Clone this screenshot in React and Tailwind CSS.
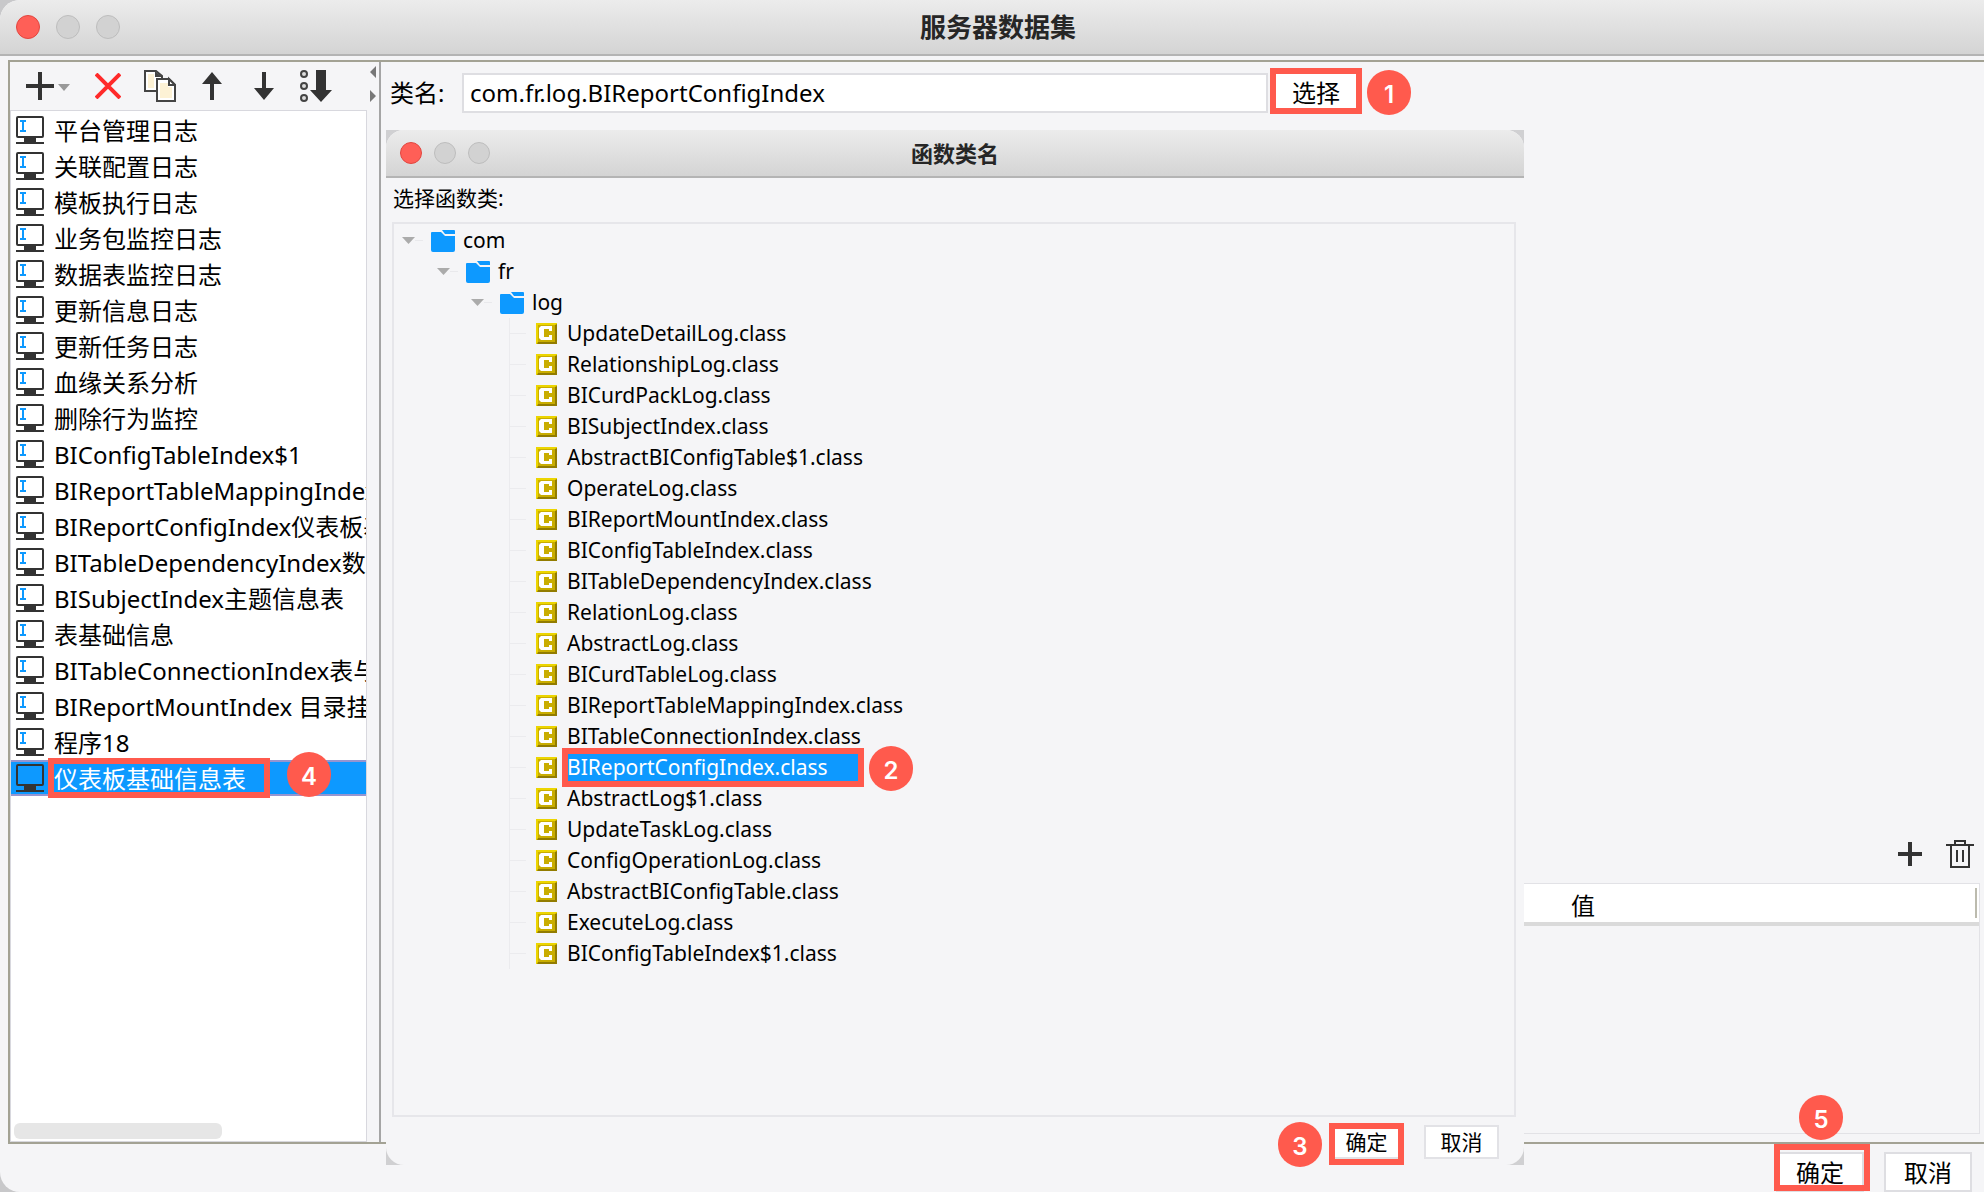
import React, { useState } from 'react';

const datasets = [
  '平台管理日志',
  '关联配置日志',
  '模板执行日志',
  '业务包监控日志',
  '数据表监控日志',
  '更新信息日志',
  '更新任务日志',
  '血缘关系分析',
  '删除行为监控',
  'BIConfigTableIndex$1',
  'BIReportTableMappingIndex',
  'BIReportConfigIndex仪表板基',
  'BITableDependencyIndex数',
  'BISubjectIndex主题信息表',
  '表基础信息',
  'BITableConnectionIndex表与',
  'BIReportMountIndex 目录挂',
  '程序18',
  '仪表板基础信息表',
];

const classes = [
  'UpdateDetailLog.class',
  'RelationshipLog.class',
  'BICurdPackLog.class',
  'BISubjectIndex.class',
  'AbstractBIConfigTable$1.class',
  'OperateLog.class',
  'BIReportMountIndex.class',
  'BIConfigTableIndex.class',
  'BITableDependencyIndex.class',
  'RelationLog.class',
  'AbstractLog.class',
  'BICurdTableLog.class',
  'BIReportTableMappingIndex.class',
  'BITableConnectionIndex.class',
  'BIReportConfigIndex.class',
  'AbstractLog$1.class',
  'UpdateTaskLog.class',
  'ConfigOperationLog.class',
  'AbstractBIConfigTable.class',
  'ExecuteLog.class',
  'BIConfigTableIndex$1.class',
];

/* Icons */
const DatasetIcon = ({ active }) => (
  <svg width="28" height="28" viewBox="0 0 28 28" className="shrink-0">
    <rect x="1" y="1" width="26" height="20" rx="1" fill={active ? '#0d99ff' : '#fff'} stroke="#333" strokeWidth="2" />
    <path d="M9 20h10v2h1v4H8v-4h1zM0 26h28v2H0z" fill="#333" />
    {!active && <path d="M4 4h6v2H8v8h2v2H4v-2h2V6H4z" fill="#0d99ff" />}
  </svg>
);

const FolderIcon = () => (
  <svg width="24" height="22" viewBox="0 0 24 22" className="shrink-0">
    <path d="M0 3a1 1 0 0 1 1-1h9l4 4h10v14a2 2 0 0 1-2 2H2a2 2 0 0 1-2-2z" fill="#0d99ff" />
    <path d="M11 0h12a1 1 0 0 1 1 1v3H14z" fill="#0d99ff" />
  </svg>
);

const ClassIcon = () => (
  <svg width="21" height="21" viewBox="0 0 21 21" className="shrink-0">
    <path d="M0 0h21v21H0z" fill="#c9ad00" />
    <path d="M0 0h21v2H2v19H0z" fill="#ecd500" />
    <path d="M21 1v20H1l1-2h17V2z" fill="#927c00" />
    <path d="M5 3h11v5h-3V6H8v8h5v-2h3v5H5l-2-2V5z" fill="#fff" />
  </svg>
);

const Triangle = () => (
  <svg width="13" height="7" viewBox="0 0 13 7" className="shrink-0">
    <path d="M0 0h13L6.5 7z" fill="#ababab" />
  </svg>
);

const AddIcon = () => (
  <svg width="44" height="28" viewBox="0 0 44 28">
    <path d="M12 0h4v12h12v4H16v12h-4V16H0v-4h12z" fill="#333" />
    <path d="M32 12h12l-6 7z" fill="#999" />
  </svg>
);

const RemoveIcon = () => (
  <svg width="26" height="26" viewBox="0 0 26 26">
    <path d="M1 1l24 24M25 1L1 25" stroke="#ff2a2a" strokeWidth="4" />
  </svg>
);

const CopyIcon = () => (
  <svg width="32" height="32" viewBox="0 0 32 32">
    <path d="M1 1h11l6 5v15H1z" fill="#fff" stroke="#444" strokeWidth="2" />
    <path d="M4 4h6v14H4z" fill="#fdf2d5" />
    <path d="M11 1v6h7z" fill="#444" />
    <path d="M13 9h12l6 6v16H13z" fill="#fff" stroke="#444" strokeWidth="2" />
    <path d="M16 13h8v4h4v11H16z" fill="#fdf2d5" />
    <path d="M25 9v6h6z" fill="#fff" stroke="#444" strokeWidth="2" />
  </svg>
);

const UpIcon = () => (
  <svg width="20" height="28" viewBox="0 0 20 28">
    <path d="M10 0l10 12h-8v16H8V12H0z" fill="#333" />
  </svg>
);

const DownIcon = () => (
  <svg width="20" height="28" viewBox="0 0 20 28">
    <path d="M10 28L0 16h8V0h4v16h8z" fill="#333" />
  </svg>
);

const SortIcon = () => (
  <svg width="32" height="32" viewBox="0 0 32 32">
    <g fill="#ddd" stroke="#444" strokeWidth="2">
      <circle cx="4" cy="4" r="3" />
      <circle cx="4" cy="16" r="3" />
      <circle cx="4" cy="28" r="3" />
    </g>
    <path d="M16 0h10v20h6L21 32 10 20h6z" fill="#333" />
  </svg>
);

const PlusIcon = () => (
  <svg width="24" height="24" viewBox="0 0 24 24">
    <path d="M10 0h4v10h10v4H14v10h-4V14H0v-4h10z" fill="#333" />
  </svg>
);

const TrashIcon = () => (
  <svg width="28" height="28" viewBox="0 0 28 28" fill="none" stroke="#333" strokeWidth="2">
    <path d="M0 5h28M9 5V1h10v4M5 5v22h18V5M11 10v12M17 10v12" />
  </svg>
);

/* Step marker and outline used by the guide */
const Step = ({ n, className }) => (
  <span
    className={`absolute z-10 flex h-[45px] w-11 items-center justify-center rounded-full bg-[#ff5a4d] pt-1 font-['Inter','Liberation_Sans',sans-serif] text-2xl font-semibold text-white ${className}`}
  >
    {n}
  </span>
);

const Outline = ({ className }) => (
  <span className={`pointer-events-none absolute border-6 border-[#ff5a4d] ${className}`} />
);

const TitleBar = ({ title, small }) => (
  <header
    className={`relative flex shrink-0 items-center justify-center border-b-2 border-[#b4b4b4] bg-linear-to-b from-[#ececec] to-[#d4d4d4] ${
      small ? 'h-12 rounded-t-[18px] text-[22px]' : 'h-14 rounded-tl-[20px] pl-3 text-[26px]'
    }`}
  >
    <div className={`absolute inset-y-0 flex items-center ${small ? 'left-[14px] gap-3' : 'left-4 gap-4'}`}>
      <button
        aria-label="关闭"
        className={`rounded-full border border-[#e2463f] bg-[#ff5f57] ${small ? 'size-[22px]' : 'size-6'}`}
      />
      <button
        aria-label="最小化"
        className={`rounded-full border border-[#bdbdbd] bg-[#d2d2d2] ${small ? 'size-[22px]' : 'size-6'}`}
      />
      <button
        aria-label="最大化"
        className={`rounded-full border border-[#bdbdbd] bg-[#d2d2d2] ${small ? 'size-[22px]' : 'size-6'}`}
      />
    </div>
    <h2 className="font-bold text-[#262626]">{title}</h2>
  </header>
);

const Sidebar = () => {
  const [selected, setSelected] = useState(datasets.length - 1);

  return (
    <aside className="flex w-[357px] shrink-0 flex-col">
      {/* Toolbar */}
      <div className="flex h-12 shrink-0 items-center pl-4">
        <button aria-label="新增" className="w-[69px]"><AddIcon /></button>
        <button aria-label="删除" className="w-[49px]"><RemoveIcon /></button>
        <button aria-label="复制" className="w-[58px]"><CopyIcon /></button>
        <button aria-label="上移" className="w-[52px]"><UpIcon /></button>
        <button aria-label="下移" className="w-[46px]"><DownIcon /></button>
        <button aria-label="排序"><SortIcon /></button>
      </div>

      {/* Dataset list */}
      <div className="flex min-h-0 grow flex-col border border-[#d8d8de] bg-white">
        <ul className="grow pt-px">
          {datasets.map((name, i) => (
            <li key={name} className="relative">
              <button
                onClick={() => setSelected(i)}
                className={`flex h-9 w-full items-center gap-2.5 overflow-hidden border-y-2 pl-[5px] text-left text-2xl whitespace-nowrap ${
                  i === selected ? 'border-[#9595d0] bg-[#0d99ff] text-white' : 'border-transparent'
                }`}
              >
                <DatasetIcon active={i === selected} />
                <span className="pt-0.5">{name}</span>
              </button>
              {i === datasets.length - 1 && (
                <>
                  <Outline className="-top-0.5 left-[37px] h-10 w-[222px]" />
                  <Step n={4} className="-top-2 left-[276px]" />
                </>
              )}
            </li>
          ))}
        </ul>
        <div className="mb-[2px] ml-[3px] h-4 w-52 shrink-0 rounded-md bg-[#e6e6e6]" />
      </div>
    </aside>
  );
};

const TreeFolder = ({ name, indent }) => (
  <div className={`flex h-[31px] items-center ${indent}`}>
    <Triangle />
    <span className="h-px w-2 bg-[#e9e9ec]" />
    <span className="ml-2"><FolderIcon /></span>
    <span className="ml-2">{name}</span>
  </div>
);

const ClassDialog = () => {
  const [picked, setPicked] = useState('BIReportConfigIndex.class');

  return (
    <section className="absolute top-[68px] right-[460px] -bottom-[23px] left-[5px] bg-[#d0d0d2]">
      <div className="flex h-full flex-col rounded-[18px] bg-[#f5f5f7] text-[21px]">
        <TitleBar title="函数类名" small />
        <p className="mt-0.5 pl-[7px] leading-9">选择函数类:</p>

        {/* Class tree */}
        <div className="mt-1.5 mr-2 ml-1.5 min-h-0 grow border-2 border-[#e6e6ea] pt-px">
          <TreeFolder name="com" indent="pl-2" />
          <TreeFolder name="fr" indent="pl-[43px]" />
          <TreeFolder name="log" indent="pl-[77px]" />
          <ul className="ml-[115px]">
            {classes.map(name => (
              <li key={name} className="relative flex h-[31px] items-center border-l border-[#ebebee]">
                <span className="h-px w-4 bg-[#ebebee]" />
                <span className="ml-2.5"><ClassIcon /></span>
                <button
                  onClick={() => setPicked(name)}
                  className={`ml-2 h-[31px] pr-7 pl-0.5 text-left leading-[31px] ${
                    name === picked ? 'w-[298px] bg-[#0d99ff] text-white' : ''
                  }`}
                >
                  {name}
                </button>
                {name === 'BIReportConfigIndex.class' && (
                  <>
                    <Outline className="-top-1 left-[52px] h-[39px] w-[302px]" />
                    <Step n={2} className="-top-1.5 left-[359px]" />
                  </>
                )}
              </li>
            ))}
          </ul>
        </div>

        {/* Dialog buttons */}
        <div className="flex h-12 shrink-0 items-start justify-end gap-5 pt-2 pr-[25px]">
          <div className="relative">
            <button className="flex h-[34px] w-[75px] items-center justify-center border-2 border-[#e2e2e6] bg-white pt-0.5">
              确定
            </button>
            <Outline className="-top-0.5 left-0 h-[42px] w-[75px]" />
            <Step n={3} className="-top-[3px] -left-[51px]" />
          </div>
          <button className="flex h-[34px] w-[75px] items-center justify-center border-2 border-[#e2e2e6] bg-white pt-0.5">
            取消
          </button>
        </div>
      </div>
    </section>
  );
};

const App = () => {
  const [className, setClassName] = useState('com.fr.log.BIReportConfigIndex');

  return (
    <div className="bg-[#c8c8ca]">
      <div className="flex min-h-screen flex-col rounded-l-[20px] bg-[#f5f5f7] font-['Noto_Sans','Noto_Sans_CJK_SC',sans-serif] text-black">
        <TitleBar title="服务器数据集" />

        <main className="mt-1 ml-2 flex grow border-2 border-r-0 border-[#a3a294]">
          <Sidebar />

          {/* Splitter */}
          <div className="flex w-[14px] shrink-0 flex-col items-center border-r-2 border-[#a5a5a5] pt-1">
            <svg width="6" height="36" viewBox="0 0 6 36" className="shrink-0">
              <path d="M6 0v12L0 6zM0 24v12l6-6z" fill="#777" />
            </svg>
          </div>

          <div className="relative flex min-w-0 grow flex-col">
            {/* Class name */}
            <div className="flex h-[62px] shrink-0 items-center pl-[9px]">
              <label htmlFor="class-name" className="w-[72px] text-2xl">类名:</label>
              <input
                id="class-name"
                type="text"
                value={className}
                onChange={e => setClassName(e.target.value)}
                className="mr-1 h-10 min-w-0 grow border-2 border-[#dedee2] bg-white px-1.5 pb-0.5 text-2xl outline-none"
              />
              <div className="relative mr-6">
                <button className="h-[38px] w-[88px] bg-white text-2xl">选择</button>
                <Outline className="-inset-x-0.5 -top-1.5 -bottom-0.5" />
                <Step n={1} className="-top-1 left-[95px]" />
              </div>
              <div className="w-[600px] shrink-0" />
            </div>

            {/* Parameters */}
            <div className="mt-[701px] mr-1 mb-2 ml-3 flex grow flex-col">
              <div className="flex h-[58px] items-center justify-end gap-6 pr-1.5">
                <button aria-label="添加参数"><PlusIcon /></button>
                <button aria-label="删除参数"><TrashIcon /></button>
              </div>
              <div className="grow border border-[#e2e2e6]">
                <table className="w-full border-b-4 border-[#dadada] bg-white text-2xl">
                  <thead>
                    <tr className="h-[38px]">
                      <th className="w-[74%]"></th>
                      <th className="py-1 pr-0.5 text-left font-normal">
                        <div className="border-r-2 border-[#bcbbae] pt-1.5 pl-1 leading-6">值</div>
                      </th>
                    </tr>
                  </thead>
                </table>
              </div>
            </div>

            <ClassDialog />
          </div>
        </main>

        {/* Window buttons */}
        <footer className="flex h-12 shrink-0 items-start justify-end gap-5 pt-2 pr-3 text-2xl">
          <div className="relative">
            <button className="h-10 w-[88px] border-2 border-[#dedee2] bg-white pt-0.5">确定</button>
            <Outline className="-top-2 -left-0.5 h-[47px] w-24" />
            <Step n={5} className="-top-[57px] left-[23px]" />
          </div>
          <button className="h-10 w-[88px] border-2 border-[#dedee2] bg-white pt-0.5">取消</button>
        </footer>
      </div>
    </div>
  );
};

export default App;
